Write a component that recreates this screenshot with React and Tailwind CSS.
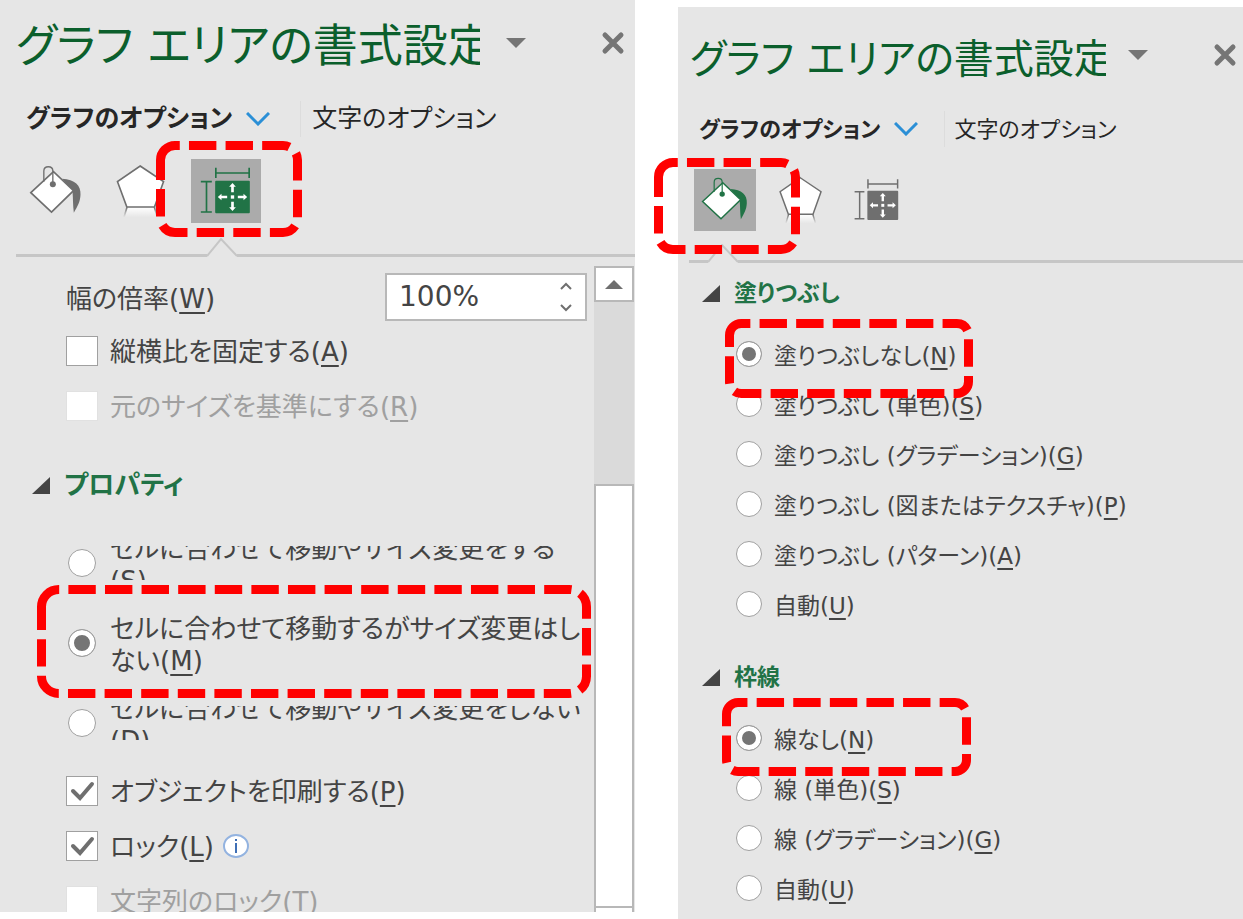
import React from 'react';

const PANE_STYLES = {
  wide: {
    header: 'h-[94px] pl-4 pr-[10px]',
    title: 'w-[464px] text-[45px]',
    menu: 'ml-[25px]',
    tabs: 'h-[50px] pl-[26px] text-[25px]',
    chevron: 'ml-[14px]',
    tabSeparator: 'ml-[30px] mr-[11px]',
    tools: 'mt-[15px] pl-[21px] gap-[15px]',
    tool: 'w-[70px] h-[64px]',
    divider: 'mt-[15px] pl-4',
    dividerStart: 'w-[191px]',
  },
  narrow: {
    header: 'h-[104px] pl-3 pr-[6px]',
    title: 'w-[416px] text-[40px]',
    menu: 'ml-[21px]',
    tabs: 'h-[36px] pl-[21px] text-[22px]',
    chevron: 'ml-[14px]',
    tabSeparator: 'ml-[26px] mr-[9px]',
    tools: 'mt-[22px] pl-4 gap-[14px]',
    tool: 'w-[62px] h-[62px]',
    divider: 'mt-[13px] pl-[11px]',
    dividerStart: 'w-[19px]',
  },
};

function BucketIcon({ active }) {
  const color = active ? '#217346' : '#6f6f6f';
  return (
    <svg viewBox="63 477 209 192" className="w-full h-full" fill="none">
      <path d="M186 536 C224 538 243 556 241 584 C240 606 232 618 221 638 C218 616 219 598 217 574 Z" fill={color} />
      <path d="M92 578 L160 515 L220 572 L154 636 Z" fill="#fff" stroke={color} strokeWidth="5" />
      <path d="M131 545 V513 C131 496 158 496 158 513 V552" stroke={color} strokeWidth="4" />
      <circle cx="158" cy="553" r="9" fill={color} />
    </svg>
  );
}

function PentagonIcon() {
  return (
    <svg viewBox="318 477 209 192" className="w-full h-full" fill="none">
      <defs>
        <linearGradient id="reflection" x1="0" y1="0" x2="0" y2="1">
          <stop offset="0" stopColor="#fff" />
          <stop offset="1" stopColor="#fff" stopOpacity="0" />
        </linearGradient>
        <linearGradient id="reflectionEdge" x1="0" y1="0" x2="0" y2="1">
          <stop offset="0" stopColor="#6f6f6f" />
          <stop offset="1" stopColor="#6f6f6f" stopOpacity="0" />
        </linearGradient>
      </defs>
      <path d="M380 622 H463 L473 652 H370 Z" fill="url(#reflection)" />
      <path d="M378 622 H383 L374 652 H369 Z M460 622 H465 L474 652 H469 Z" fill="url(#reflectionEdge)" />
      <path d="M420 498 L490 545 L463 621 H380 L352 545 Z" fill="#fff" stroke="#6f6f6f" strokeWidth="5" />
    </svg>
  );
}

function SizeIcon({ active }) {
  const color = active ? '#217346' : '#6f6f6f';
  return (
    <svg viewBox="573 477 209 192" className="w-full h-full" fill="none">
      <path d="M647 503 V534 M747 503 V534 M647 519 H747" stroke={color} strokeWidth="5" />
      <path d="M602 545 H635 M602 636 H635 M619 545 V636" stroke={color} strokeWidth="5" />
      <rect x="645" y="542" width="104" height="98" rx="3" fill={color} />
      <g fill="#fff">
        <rect x="692" y="586" width="10" height="10" />
        <path d="M697 549 L707 560 H701 V577 H693 V560 H687 Z" />
        <path d="M697 633 L707 622 H701 V605 H693 V622 H687 Z" />
        <path d="M653 591 L664 581 V587 H681 V595 H664 V601 Z" />
        <path d="M741 591 L730 581 V587 H713 V595 H730 V601 Z" />
      </g>
    </svg>
  );
}

// Dashed red callout. The outline starts at the end of the left edge so dashes run clockwise.
function Callout({ width, height, className }) {
  const s = 4.5;
  const w = width - 9;
  const h = height - 9;
  const r = Math.min(w, h) / 6;
  const d = `M${s} ${s + r} a${r} ${r} 0 0 1 ${r} ${-r} h${w - 2 * r} a${r} ${r} 0 0 1 ${r} ${r} v${h - 2 * r} a${r} ${r} 0 0 1 ${-r} ${r} h${2 * r - w} a${r} ${r} 0 0 1 ${-r} ${-r} Z`;
  return (
    <svg width={width} height={height} className={`absolute z-10 max-w-none pointer-events-none ${className}`} fill="none" aria-hidden="true">
      <path d={d} stroke="#ff0000" strokeWidth="9" strokeDasharray="27.4 9.2" />
    </svg>
  );
}

function Tool({ label, active, className, children, callout }) {
  return (
    <div className="relative">
      <button aria-label={label} className={`block ${className} ${active ? 'bg-[#ababab]' : ''}`}>
        {children}
      </button>
      {callout}
    </div>
  );
}

function PaneHeader({ size, active }) {
  const s = PANE_STYLES[size];
  return (
    <div className="shrink-0">
      <header className={`flex items-center ${s.header}`}>
        <h1 className={`overflow-hidden whitespace-nowrap leading-[60px] text-[#0b5f2c] ${s.title}`}>グラフ エリアの書式設定</h1>
        <button aria-label="作業ウィンドウ オプション" className={`-mt-2 ${s.menu}`}>
          <svg width="22" height="11" viewBox="0 0 22 11"><path d="M1 0 H21 L11 10 Z" fill="#757575" /></svg>
        </button>
        <button aria-label="閉じる" className="ml-auto -mt-2">
          <svg width="24" height="24" viewBox="0 0 24 24" stroke="#757575" strokeWidth="5" strokeLinecap="round">
            <path d="M4 4 L20 20 M20 4 L4 20" />
          </svg>
        </button>
      </header>

      <div className={`flex items-center whitespace-nowrap text-[#262626] ${s.tabs}`}>
        <button className="flex items-center font-bold">
          グラフのオプション
          <svg width="24" height="14" viewBox="0 0 24 14" className={s.chevron} fill="none">
            <path d="M1 1 L12 12 L23 1" stroke="#2b8fd6" strokeWidth="3" />
          </svg>
        </button>
        <span className={`w-px h-9 bg-[#dcdcdc] ${s.tabSeparator}`} />
        <button>文字のオプション</button>
      </div>

      <div className={`flex ${s.tools}`}>
        <Tool
          label="塗りつぶしと線"
          active={active === 'fill'}
          className={s.tool}
          callout={active === 'fill' && <Callout width={146} height={96} className="-left-10 -top-[11px]" />}
        >
          <BucketIcon active={active === 'fill'} />
        </Tool>
        <Tool label="効果" className={s.tool}>
          <PentagonIcon />
        </Tool>
        <Tool
          label="サイズとプロパティ"
          active={active === 'size'}
          className={s.tool}
          callout={active === 'size' && <Callout width={146} height={96} className="-left-[35px] -top-[18px]" />}
        >
          <SizeIcon active={active === 'size'} />
        </Tool>
      </div>

      <div className={`flex items-end ${s.divider}`}>
        <span className={`h-[3px] bg-[#c6c6c6] ${s.dividerStart}`} />
        <svg width="30" height="19" viewBox="0 0 30 19" fill="none">
          <path d="M0 18 L14 1 L30 18" stroke="#c6c6c6" strokeWidth="2" />
        </svg>
        <span className="h-[3px] grow bg-[#c6c6c6]" />
      </div>
    </div>
  );
}

function Key({ children }) {
  return <span className="underline decoration-2 underline-offset-4">{children}</span>;
}

function CheckRow({ id, checked, disabled, label, hotkey, children }) {
  return (
    <div className="flex items-center h-[55px] pl-[66px]">
      <div className="relative shrink-0">
        <input
          id={id}
          type="checkbox"
          defaultChecked={checked}
          disabled={disabled}
          className="peer block appearance-none w-8 h-[30px] bg-white border border-[#a0a0a0] disabled:border-[#e1e1e1]"
        />
        <svg viewBox="0 0 32 30" className="absolute inset-0 hidden peer-checked:block pointer-events-none" fill="none">
          <path d="M7 15 L14 22 L26 8" stroke="#6f6f6f" strokeWidth="4" strokeLinecap="round" />
        </svg>
      </div>
      <label htmlFor={id} className={`ml-3 pt-1 whitespace-nowrap ${disabled ? 'text-[#a0a0a0]' : ''}`}>
        {label}(<Key>{hotkey}</Key>)
      </label>
      {children}
    </div>
  );
}

const radioBase =
  'appearance-none shrink-0 rounded-full border border-[#a0a0a0] bg-white checked:bg-[#757575]';

// Two-line options; clipped ones only show a strip of their label
function PropertyOption({ id, checked, clipped, lines, hotkey, callout }) {
  return (
    <div className="relative flex items-center h-20 pl-[68px]">
      <input
        id={id}
        type="radio"
        name="placement"
        defaultChecked={checked}
        className={`${radioBase} size-7 checked:shadow-[inset_0_0_0_5px_#fff]`}
      />
      <label
        htmlFor={id}
        className={`ml-[14px] flex items-center whitespace-nowrap leading-8 ${clipped ? 'h-[34px] overflow-hidden' : ''}`}
      >
        <span className="pt-1">
          {lines[0]}
          <br />
          {lines[1]}(<Key>{hotkey}</Key>)
        </span>
      </label>
      {callout}
    </div>
  );
}

function FillOption({ name, option, index }) {
  const id = `${name}-${index}`;
  return (
    <div className="relative flex items-center h-[50px] pl-[58px]">
      <input
        id={id}
        type="radio"
        name={name}
        defaultChecked={index === 0}
        className={`${radioBase} size-[26px] checked:shadow-[inset_0_0_0_5px_#fff]`}
      />
      <label htmlFor={id} className="ml-3 pt-1 whitespace-nowrap">
        {option.label}(<Key>{option.hotkey}</Key>)
      </label>
      {option.callout}
    </div>
  );
}

function SectionHeading({ className, children }) {
  return (
    <h2 className={className}>
      <button className="flex items-center gap-[14px] font-bold text-[#217346]">
        <svg width="18" height="17" viewBox="0 0 18 17"><path d="M0 17 L18 0 V17 Z" fill="#444" /></svg>
        {children}
      </button>
    </h2>
  );
}

const fillOptions = [
  { label: '塗りつぶしなし', hotkey: 'N', callout: <Callout width={248} height={79} className="left-[47px] -top-[10px]" /> },
  { label: '塗りつぶし (単色)', hotkey: 'S' },
  { label: '塗りつぶし (グラデーション)', hotkey: 'G' },
  { label: '塗りつぶし (図またはテクスチャ)', hotkey: 'P' },
  { label: '塗りつぶし (パターン)', hotkey: 'A' },
  { label: '自動', hotkey: 'U' },
];

const lineOptions = [
  { label: '線なし', hotkey: 'N', callout: <Callout width={249} height={78} className="left-11 -top-[15px]" /> },
  { label: '線 (単色)', hotkey: 'S' },
  { label: '線 (グラデーション)', hotkey: 'G' },
  { label: '自動', hotkey: 'U' },
];

function ScrollBar() {
  return (
    <div className="flex flex-col shrink-0 w-[41px] pt-[9px] pr-px">
      <button aria-label="上へスクロール" className="flex items-center justify-center h-9 shrink-0 bg-white border-2 border-[#b8b8b8]">
        <svg width="18" height="9" viewBox="0 0 18 9"><path d="M0 9 L9 0 L18 9 Z" fill="#6f6f6f" /></svg>
      </button>
      <div className="h-[182px] shrink-0 bg-[#dadada]" />
      <div className="grow bg-white border-2 border-[#b8b8b8]" />
      <div className="h-1 shrink-0 bg-white border-x-2 border-[#b8b8b8]" />
    </div>
  );
}

function PropertiesPane() {
  return (
    <section className="flex flex-col min-h-0 mb-[7px] bg-[#e6e6e6]">
      <PaneHeader size="wide" active="size" />
      <div className="flex grow min-h-0 overflow-hidden text-[26px] text-[#444]">
        <div className="grow min-w-0 pt-4">
          <div className="flex items-center justify-between h-12 pl-[66px] pr-[7px]">
            <label htmlFor="scale-width" className="pt-1">幅の倍率(<Key>W</Key>)</label>
            <div className="flex items-center w-[202px] h-12 bg-white border-2 border-[#b8b8b8]">
              <input id="scale-width" type="text" defaultValue="100%" className="grow min-w-0 pl-3 text-[28px] bg-transparent outline-none" />
              <div className="flex flex-col gap-3 pr-3">
                <button aria-label="増やす" className="block">
                  <svg width="14" height="9" viewBox="0 0 14 9" fill="none"><path d="M2 7 L7 2 L12 7" stroke="#6f6f6f" strokeWidth="2" /></svg>
                </button>
                <button aria-label="減らす" className="block">
                  <svg width="14" height="9" viewBox="0 0 14 9" fill="none"><path d="M2 2 L7 7 L12 2" stroke="#6f6f6f" strokeWidth="2" /></svg>
                </button>
              </div>
            </div>
          </div>
          <div className="mt-[2px]">
            <CheckRow id="lock-aspect" label="縦横比を固定する" hotkey="A" />
            <CheckRow id="relative-size" label="元のサイズを基準にする" hotkey="R" disabled />
          </div>

          <SectionHeading className="flex items-center h-[52px] mt-[26px] pl-8">プロパティ</SectionHeading>

          <div className="mt-3">
            <PropertyOption id="move-size" clipped lines={['セルに合わせて移動やサイズ変更をする', '']} hotkey="S" />
            <PropertyOption
              id="move-only"
              checked
              lines={['セルに合わせて移動するがサイズ変更はし', 'ない']}
              hotkey="M"
              callout={<Callout width={554} height={113} className="left-[37px] -top-[18px]" />}
            />
            <PropertyOption id="fixed" clipped lines={['セルに合わせて移動やサイズ変更をしない', '']} hotkey="D" />
          </div>

          <CheckRow id="print-object" label="オブジェクトを印刷する" hotkey="P" checked />
          <CheckRow id="locked" label="ロック" hotkey="L" checked>
            <button aria-label="情報" className="ml-2">
              <svg width="28" height="26" viewBox="0 0 28 26">
                <ellipse cx="14" cy="13" rx="12" ry="11" fill="#fff" stroke="#93b3e0" strokeWidth="2" />
                <path d="M14 10 V20 M14 6 V8" stroke="#3f6fb5" strokeWidth="2" />
              </svg>
            </button>
          </CheckRow>
          <CheckRow id="lock-text" label="文字列のロック" hotkey="T" disabled />
        </div>
        <ScrollBar />
      </div>
    </section>
  );
}

function FillPane() {
  return (
    <section className="mt-[7px] bg-[#e6e6e6]">
      <PaneHeader size="narrow" active="fill" />
      <div className="pt-[10px] text-[23px] text-[#444]">
        <SectionHeading className="flex items-center h-10 pl-6">塗りつぶし</SectionHeading>
        <div className="mt-4">
          {fillOptions.map((option, i) => (
            <FillOption key={option.label} name="fill" option={option} index={i} />
          ))}
        </div>
        <SectionHeading className="flex items-center h-10 mt-7 pl-6">枠線</SectionHeading>
        <div className="mt-4">
          {lineOptions.map((option, i) => (
            <FillOption key={option.label} name="line" option={option} index={i} />
          ))}
        </div>
      </div>
    </section>
  );
}

function App() {
  return (
    <main
      lang="ja"
      className="grid grid-cols-[635fr_565fr] grid-rows-[minmax(0,1fr)] gap-x-[43px] h-screen overflow-hidden bg-white font-['DejaVu_Sans','Noto_Sans_CJK_JP',sans-serif] [font-feature-settings:'palt']"
    >
      <PropertiesPane />
      <FillPane />
    </main>
  );
}

export default App;
